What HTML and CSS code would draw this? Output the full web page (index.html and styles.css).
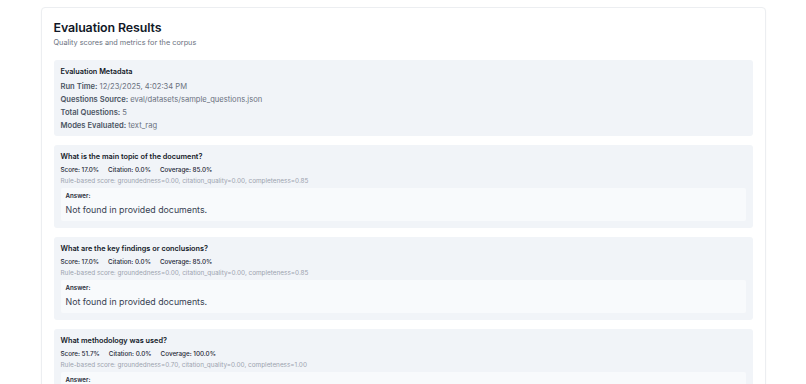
FILE: index.html
```html
<!DOCTYPE html>
<html lang="en">
<head>
<meta charset="utf-8">
<title>Evaluation Results</title>
<link rel="stylesheet" href="styles.css">
</head>
<body>
<div class="page">
  <section class="card">
    <h1 class="title">Evaluation Results</h1>
    <p class="subtitle">Quality scores and metrics for the corpus</p>
    <div class="panels">
      <div class="panel meta">
        <div class="panel-title">Evaluation Metadata</div>
        <div class="meta-line"><span class="label">Run Time:</span> 12/23/2025, 4:02:34 PM</div>
        <div class="meta-line"><span class="label">Questions Source:</span> eval/datasets/sample_questions.json</div>
        <div class="meta-line"><span class="label">Total Questions:</span> 5</div>
        <div class="meta-line"><span class="label">Modes Evaluated:</span> text_rag</div>
      </div>

      <div class="panel question">
        <div class="panel-title">What is the main topic of the document?</div>
        <div class="scores"><span>Score: 17.0%</span><span>Citation: 0.0%</span><span>Coverage: 85.0%</span></div>
        <div class="rule">Rule-based score: groundedness=0.00, citation_quality=0.00, completeness=0.85</div>
        <div class="answer">
          <div class="answer-label">Answer:</div>
          <div class="answer-text">Not found in provided documents.</div>
        </div>
      </div>

      <div class="panel question">
        <div class="panel-title">What are the key findings or conclusions?</div>
        <div class="scores"><span>Score: 17.0%</span><span>Citation: 0.0%</span><span>Coverage: 85.0%</span></div>
        <div class="rule">Rule-based score: groundedness=0.00, citation_quality=0.00, completeness=0.85</div>
        <div class="answer">
          <div class="answer-label">Answer:</div>
          <div class="answer-text">Not found in provided documents.</div>
        </div>
      </div>

      <div class="panel question">
        <div class="panel-title">What methodology was used?</div>
        <div class="scores"><span>Score: 51.7%</span><span>Citation: 0.0%</span><span>Coverage: 100.0%</span></div>
        <div class="rule">Rule-based score: groundedness=0.70, citation_quality=0.00, completeness=1.00</div>
        <div class="answer">
          <div class="answer-label">Answer:</div>
          <div class="answer-text">Not found in provided documents.</div>
        </div>
      </div>
    </div>
  </section>
</div>
</body>
</html>
```

FILE: styles.css
```css
* { box-sizing: border-box; }
html, body {
  margin: 0;
  padding: 0;
  background: #ffffff;
  font-family: Inter, "Noto Sans", "Liberation Sans", sans-serif;
  color: #111827;
}
.page {
  padding-top: 7px;
  display: flex;
  justify-content: center;
}
.card {
  width: 725px;
  border: 1px solid #eceef1;
  border-radius: 4px;
  box-shadow: 0 1px 2px rgba(0,0,0,0.03);
  padding: 11px 12px 20px;
  background: #fff;
}
.title {
  margin: 0;
  font-size: 12.4px;
  line-height: 17px;
  font-weight: 600;
  color: #111827;
  letter-spacing: -0.1px;
}
.subtitle {
  margin: 2px 0 0;
  font-size: 7.3px;
  line-height: 10px;
  color: #6b7280;
}
.panels {
  margin-top: 12px;
  display: flex;
  flex-direction: column;
  gap: 9px;
}
.panel {
  background: #f1f4f8;
  border-radius: 3px;
  padding: 7px 7px 7px;
}
.meta { padding-bottom: 4px; }
.panel-title {
  font-size: 7.3px;
  line-height: 9px;
  font-weight: 600;
  color: #111827;
}
.meta .panel-title { margin-bottom: 4px; }
.meta-line {
  font-size: 7.6px;
  line-height: 13px;
  color: #6b7280;
}
.label {
  font-weight: 600;
  color: #4b5563;
}
.scores {
  margin-top: 5px;
  display: flex;
  gap: 9px;
  font-size: 6.3px;
  line-height: 9px;
  font-weight: 500;
  color: #1f2937;
}
.rule {
  margin-top: 2px;
  font-size: 6.4px;
  line-height: 8px;
  color: #9ca3af;
}
.answer {
  margin-top: 3px;
  background: #f8fafc;
  border-radius: 2px;
  padding: 4px 5px 5px;
}
.answer-label {
  font-size: 6.2px;
  line-height: 8px;
  font-weight: 600;
  color: #1f2937;
}
.answer-text {
  margin-top: 4px;
  font-size: 8.8px;
  line-height: 12px;
  color: #374151;
}
```
